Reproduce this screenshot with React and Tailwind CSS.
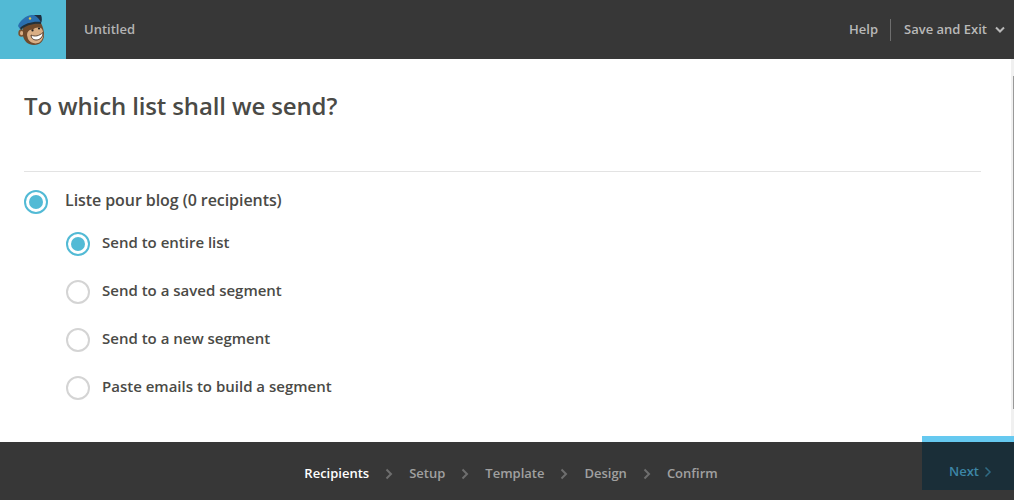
import React from "react";

const font = { fontFamily: '"Open Sans", sans-serif' };

function Monkey() {
  return (
    <svg width="28" height="32" viewBox="0 0 28 32" className="mr-[4px]">
      <ellipse cx="4.5" cy="19" rx="3.2" ry="3.8" fill="#7a5230" />
      <ellipse cx="4.6" cy="19.2" rx="1.6" ry="2.1" fill="#d9ae85" />
      <path d="M6 14 C10 9 18 8 24 9 C26 13 27 17 27 21 C27 27 23 31 17 31 C11 31 7 27 6 22 Z" fill="#6f4a2c" />
      <path d="M10 21 C10 17 13 15 16 16 C18 13 23 13 25 15 C27 19 27 25 23 28 C19 31 13 29 11 25 Z" fill="#d9ae85" />
      <path d="M14 21 C18 23 22 22 26 18.5 C26 23 23 26 19 26 C16 26 14 24 14 21 Z" fill="#fff" stroke="#3a2415" strokeWidth="0.8" />
      <circle cx="15.5" cy="16.5" r="1.1" fill="#222" />
      <circle cx="22" cy="14.5" r="1.1" fill="#222" />
      <path d="M1 12 C3 6 9 2 14 1 L24 1 C25 4 25 7 24 9 C17 8 8 10 3 15 Z" fill="#2a6fb0" />
      <path d="M17 1 L24 1 C25 4 25 7 24 9 C23 6 21 3 17 1 Z" fill="#1f2f3d" />
      <path d="M3 14 C8 9 17 7 24 8 L24 10 C17 9 9 11 4 16 Z" fill="#22303a" />
      <circle cx="13" cy="4.5" r="1.2" fill="#e6c34c" />
    </svg>
  );
}

function Chevron({ className, sw = 2 }) {
  return (
    <svg width="8" height="12" viewBox="0 0 8 12" fill="none" stroke="currentColor" strokeWidth={sw} className={className}>
      <path d="M1.5 1.5 L6 6 L1.5 10.5" />
    </svg>
  );
}

function Radio({ checked }) {
  return (
    <span
      className={
        "flex h-[24px] w-[24px] shrink-0 items-center justify-center rounded-full border-2 bg-white " +
        (checked ? "border-[#52bad5]" : "border-[#d4d4d4]")
      }
    >
      {checked && <span className="h-[14px] w-[14px] rounded-full bg-[#52bad5]" />}
    </span>
  );
}

function SubOption({ label, checked }) {
  return (
    <div className="flex h-[48px] items-center gap-[12px]">
      <Radio checked={checked} />
      <span className="pb-[4px] text-[15px] font-semibold text-[#4a4a46]">{label}</span>
    </div>
  );
}

const steps = ["Recipients", "Setup", "Template", "Design", "Confirm"];

export default function App() {
  return (
    <div style={font} className="relative flex h-[500px] w-[1014px] flex-col overflow-hidden bg-white">
      <header className="flex h-[59px] shrink-0 items-center bg-[#373737]">
        <div className="flex h-full w-[66px] items-center justify-center bg-[#52bad5]">
          <Monkey />
        </div>
        <span className="ml-[18px] text-[13px] font-semibold text-[#b3b3b3]">Untitled</span>
        <div className="ml-auto flex items-center text-[13px] font-semibold text-[#b9b9b9]">
          <span>Help</span>
          <span className="mr-[13px] ml-[12px] h-[22px] w-px bg-[#6e6e6e]" />
          <span>Save and Exit</span>
          <svg width="10" height="8" viewBox="0 0 10 8" fill="none" stroke="currentColor" strokeWidth="2" className="mr-[9px] ml-[8px]">
            <path d="M1 1.5 L5 5.5 L9 1.5" />
          </svg>
        </div>
      </header>

      <main className="flex min-h-0 flex-1">
        <div className="min-w-0 flex-1 pr-[30px] pl-6">
          <h1 className="mt-[30px] text-[24px] leading-[33px] font-semibold tracking-[-0.13px] text-[#4a4a46]">
            To which list shall we send?
          </h1>
          <div className="mt-[49px] border-t border-[#e3e3e3]" />
          <div className="mt-[18px] flex items-start gap-[17px]">
            <Radio checked />
            <span className="text-[16px] leading-[21px] font-semibold tracking-[-0.07px] text-[#4a4a46]">
              Liste pour blog (0 recipients)
            </span>
          </div>
          <div className="mt-[6px] ml-[42px] flex flex-col">
            <SubOption label="Send to entire list" checked />
            <SubOption label="Send to a saved segment" />
            <SubOption label="Send to a new segment" />
            <SubOption label="Paste emails to build a segment" />
          </div>
        </div>
        <div className="flex w-[3px] shrink-0 justify-end bg-[#f0f0f0]">
          <div className="mt-[17px] mb-[33px] w-px bg-[#999999]" />
        </div>
      </main>

      <footer className="relative flex h-[58px] shrink-0 items-center justify-center bg-[#373737] pt-[6px] pl-[8px] text-[13px] font-semibold text-[#a0a0a0]">
        <div className="flex items-center">
          {steps.map((s, i) => (
            <React.Fragment key={s}>
              {i > 0 && <Chevron className="mx-[16px] text-[#6e6e6e]" />}
              <span className={i === 0 ? "text-white" : ""}>{s}</span>
            </React.Fragment>
          ))}
        </div>
        <div className="absolute top-[-6px] right-0 flex h-[54px] w-[92px] items-center justify-center border-t-[6px] border-[#66c9f0] bg-[#1a2e38] pt-[11px] pl-[5px] text-[#3d86a6]">
          <span>Next</span>
          <Chevron className="ml-[5px] text-[#2f6b85]" sw={1.5} />
        </div>
      </footer>
    </div>
  );
}
